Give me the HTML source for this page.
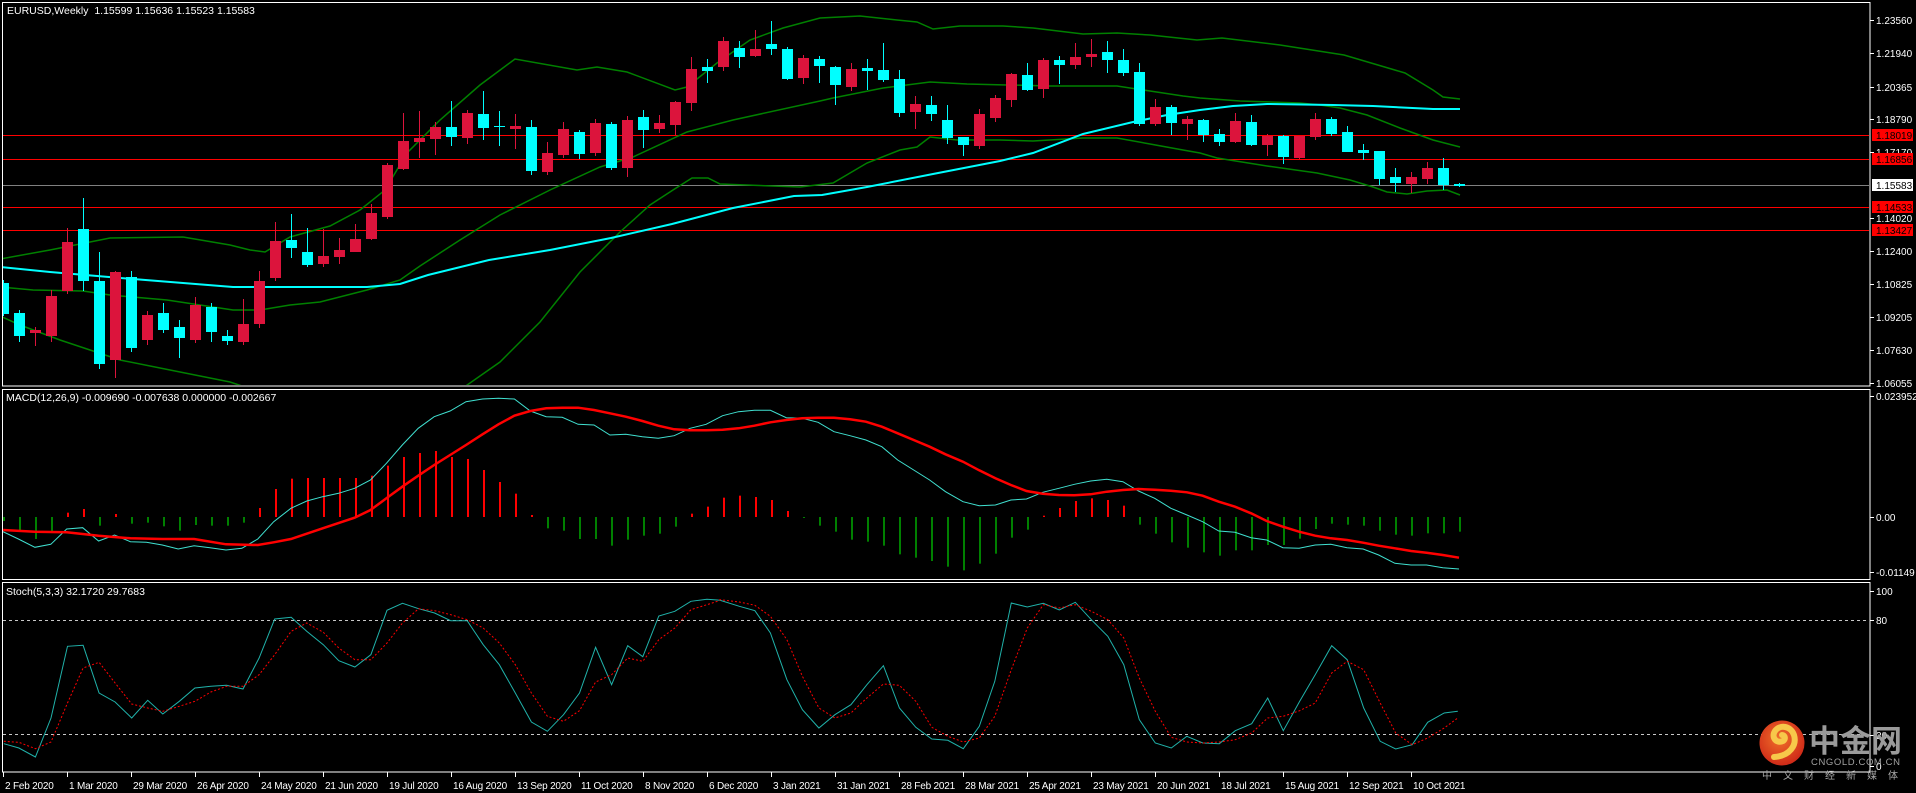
<!DOCTYPE html>
<html><head><meta charset="utf-8">
<style>
html,body{margin:0;padding:0;background:#000;width:1916px;height:793px;overflow:hidden}
svg{display:block}
text{font-family:"Liberation Sans","Noto Sans CJK SC",sans-serif;font-size:10.5px;fill:#fff}
text.ax{font-size:10px}
text.dt{font-size:10px;letter-spacing:-0.2px}
</style></head>
<body>
<svg id="s" width="1916" height="793" viewBox="0 0 1916 793" xmlns="http://www.w3.org/2000/svg">
<defs>
<clipPath id="cm"><rect x="3" y="3" width="1866" height="382"/></clipPath>
<clipPath id="cd"><rect x="3" y="390" width="1866" height="189"/></clipPath>
<clipPath id="cs"><rect x="3" y="584" width="1866" height="187"/></clipPath>
<radialGradient id="lg" cx="0.45" cy="0.4" r="0.6"><stop offset="0" stop-color="#f0702a"/><stop offset="1" stop-color="#cf2a18"/></radialGradient>
</defs>
<rect width="1916" height="793" fill="#000"/>
<g id="main" clip-path="url(#cm)"></g>
<g id="macd" clip-path="url(#cd)"></g>
<g id="stoch" clip-path="url(#cs)"></g>
<g id="frame" fill="none" stroke="#fff" stroke-width="1">
<rect x="2.5" y="2.5" width="1867.5" height="383.5"/>
<rect x="2.5" y="389.5" width="1867.5" height="190"/>
<rect x="2.5" y="582.5" width="1867.5" height="189.5"/>
</g>
<g id="ax"></g>
<text x="7" y="14">EURUSD,Weekly&#160;&#160;1.15599 1.15636 1.15523 1.15583</text>
<text x="6" y="401">MACD(12,26,9) -0.009690 -0.007638 0.000000 -0.002667</text>
<text x="6" y="595">Stoch(5,3,3) 32.1720 29.7683</text>
<g id="logo">
<circle cx="1782" cy="743" r="22.5" fill="url(#lg)"/>
<path d="M1774 757 C1790 756 1797 745 1794 735 C1791 726 1780 724 1775 731 C1771 737 1776 744 1783 741 C1786 739 1785 735 1782 735" fill="none" stroke="#f7c84a" stroke-width="6" stroke-linecap="round"/>
<text x="1809" y="752" style="font-size:31px;font-weight:bold;fill:#9a9a9a;font-family:'Noto Sans CJK SC',sans-serif">中金网</text>
<text x="1811" y="765" style="font-size:9.5px;fill:#a0a0a0;letter-spacing:0.6px">CNGOLD.COM.CN</text>
<text x="1762" y="779" style="font-size:10px;fill:#a8a8a8;letter-spacing:11px;font-family:'Noto Sans CJK SC',sans-serif">中文财经新媒体</text>
</g>
</svg>
<script>
var NS="http://www.w3.org/2000/svg";
function el(p,t,a){var e=document.createElementNS(NS,t);for(var k in a)e.setAttribute(k,a[k]);p.appendChild(e);return e;}
function mono(pts){var o=[];pts.forEach(function(q){if(!o.length||q[0]>o[o.length-1][0]+0.5)o.push(q);});return o;}
function pl(p,pts,st,w,extra){pts=mono(pts);var d=pts.map(function(q,i){return (i?"L":"M")+q[0].toFixed(1)+" "+q[1].toFixed(1)}).join("");var a={d:d,fill:"none",stroke:st,"stroke-width":w};for(var k in extra)a[k]=extra[k];return el(p,"path",a);}
var M=document.getElementById("main"),D=document.getElementById("macd"),S=document.getElementById("stoch"),AX=document.getElementById("ax"),SV=document.getElementById("s");
[[135.5,"#ff0000"],[159.5,"#ff0000"],[207.5,"#ff0000"],[230.5,"#ff0000"],[185.5,"#808080"]].forEach(function(l){el(M,"line",{x1:3,x2:1870,y1:l[0],y2:l[0],stroke:l[1],"stroke-width":1});});
var G="#008000";
pl(M,[[0,259],[50,250],[110,238],[183,237],[230,245],[250,250],[265,252],[290,237],[330,226],[360,210],[385,190],[407,153],[440,120],[480,85],[515,59],[577,70],[597,67],[627,72],[675,90],[687,87],[717,63],[750,40],[783,28],[820,18],[860,16],[897,20],[917,22],[933,29],[960,26],[1003,26],[1033,28],[1083,34],[1117,33],[1150,35],[1197,40],[1222,38],[1280,45],[1344,55],[1405,73],[1433,90],[1443,97],[1460,99]],G,1.5);
pl(M,[[0,287],[33,290],[83,291],[110,295],[167,300],[233,310],[260,310],[290,305],[320,302],[367,290],[400,280],[420,266],[460,240],[500,215],[550,190],[600,167],[633,157],[687,132],[733,120],[820,101],[833,98],[883,88],[930,82],[967,84],[1050,86],[1117,86],[1150,91],[1183,96],[1200,98],[1240,101],[1300,103],[1320,105],[1340,108],[1367,115],[1400,128],[1433,140],[1460,147]],G,1.5);
pl(M,[[0,316],[20,325],[60,340],[120,360],[180,372],[230,382],[260,392],[300,410],[400,410],[460,390],[500,362],[540,322],[580,272],[620,232],[650,205],[673,190],[692,178],[708,178],[720,184],[800,187],[833,183],[867,163],[900,150],[917,147],[930,137],[957,140],[1000,140],[1033,141],[1083,138],[1117,138],[1150,144],[1183,150],[1200,153],[1217,158],[1267,166],[1317,173],[1350,180],[1373,187],[1387,192],[1407,194],[1427,191],[1447,190],[1460,195]],G,1.5);
pl(M,[[0,267],[50,272],[133,279],[233,287],[367,287],[400,284],[428,275],[489,260],[550,250],[611,238],[672,224],[733,208],[794,196],[822,195],[867,187],[933,174],[1000,161],[1033,153],[1083,134],[1133,122],[1167,115],[1200,110],[1233,106],[1267,104],[1333,105],[1373,106],[1433,109],[1460,109]],"#00ffff",2);
var C=[["c",283,314,280,316],["c",313,336,310,342],["r",330,333,327,346],["r",296,336,290,342],["r",242,291,228,294],["c",229,281,198,291],["c",281,364,252,369],["r",272,360,271,378],["c",277,348,271,352],["r",315,340,311,345],["c",313,330,303,333],["c",327,338,320,358],["r",305,340,297,343],["c",307,332,303,342],["c",336,341,330,345],["r",324,342,299,345],["r",281,324,271,328],["r",241,278,222,281],["c",240,248,214,258],["c",252,265,228,267],["r",256,264,229,267],["r",250,257,238,264],["r",239,252,224,252],["r",213,239,204,240],["r",165,217,163,219],["r",141,169,113,170],["r",138,142,111,158],["r",127,139,122,155],["c",127,137,101,146],["r",113,138,110,144],["c",114,128,91,140],["c",126,127,111,146],["r",126,129,114,149],["c",127,171,120,175],["r",153,172,142,175],["r",129,155,122,158],["c",132,154,130,159],["r",123,153,119,156],["c",124,168,122,170],["r",120,168,116,177],["c",117,130,110,148],["r",123,129,115,133],["r",102,125,101,135],["r",69,103,57,111],["c",67,71,59,83],["r",41,67,37,71],["c",48,57,41,68],["r",49,56,30,57],["c",44,49,21,55],["c",49,79,47,80],["r",58,78,55,84],["c",59,66,56,83],["c",67,85,66,105],["r",69,87,63,91],["c",68,71,59,90],["c",70,80,43,82],["c",79,113,70,117],["r",104,112,96,129],["c",105,114,96,121],["c",120,138,105,144],["c",137,145,137,156],["r",114,146,109,149],["r",98,118,95,122],["r",74,100,73,107],["c",75,90,63,91],["r",60,89,58,98],["c",60,65,56,84],["r",57,65,43,69],["r",54,57,39,67],["c",52,60,41,73],["c",60,73,49,76],["c",72,124,63,126],["r",107,124,99,126],["c",107,123,105,135],["r",119,124,116,140],["c",120,135,119,142],["c",134,142,129,146],["r",121,142,113,143],["c",122,145,115,146],["r",136,145,134,156],["c",136,157,135,164],["r",136,158,136,159],["r",119,137,113,140],["c",119,134,117,136],["c",132,152,126,152],["c",150,153,144,160],["c",151,179,151,185],["c",177,183,168,192],["r",177,184,172,193],["r",168,179,162,184],["c",168,185,158,190],["c",184,186,183,187]];
C.forEach(function(c,i){var x=Math.round(3+16*i);var col=c[0]=="r"?"#dc143c":"#00ffff";
el(M,"rect",{x:x,y:c[3],width:1,height:Math.max(1,c[4]-c[3]),fill:col});
el(M,"rect",{x:x-5,y:c[1],width:11,height:Math.max(1,c[2]-c[1]),fill:col});});
var H=[408,440,462,440,383,372,422,387,416,413,424,437,420,422,422,413,369,312,281,279,279,279,279,272,242,216,204,198,216,222,255,291,326,390,430,437,462,462,482,464,452,446,425,386,365,338,332,336,345,378,398,422,440,464,470,482,508,518,528,545,556,536,506,458,434,392,369,348,340,345,362,419,446,472,488,502,512,496,496,480,480,461,432,416,419,422,437,449,452,445,445,440];
H.forEach(function(v,i){var x=Math.round(3+16*i);var y=385+v/3;var up=y<517;el(D,"rect",{x:x,y:Math.min(y,517),width:2,height:Math.max(1,Math.abs(517-y)),fill:up?"#ff0000":"#008000"});});
function m8(a){return a.map(function(p){return [p[0]/1.633,385+p[1]/3]});}
function m9(a){return a.map(function(p){return [940+p[0]/1.607,385+p[1]/3]});}
var sig=m8([[5,435],[57,440],[109,442],[161,452],[213,460],[265,462],[317,462],[369,478],[421,480],[447,472],[475,462],[527,430],[579,398],[605,375],[631,340],[657,305],[683,272],[709,240],[735,210],[761,180],[788,148],[814,118],[840,92],[866,78],[892,70],[918,68],[944,68],[970,75],[996,85],[1022,95],[1049,108],[1075,122],[1101,133],[1127,136],[1153,136],[1180,134],[1206,130],[1232,122],[1258,112],[1284,105],[1310,100],[1336,98],[1362,98],[1388,103],[1414,110],[1440,125],[1466,145],[1492,165],[1518,185],[1544,208]]).concat(m9([[0,193],[37,230],[63,256],[89,280],[114,300],[139,318],[165,326],[191,330],[216,331],[242,328],[268,320],[294,315],[319,312],[345,314],[371,317],[397,322],[422,332],[448,350],[474,365],[500,385],[525,408],[551,425],[577,440],[603,452],[628,460],[654,465],[680,473],[705,482],[731,490],[757,498],[782,503],[808,510],[834,518]]));
var mac=m8([[5,440],[30,462],[57,487],[83,478],[109,432],[135,428],[161,468],[187,450],[213,470],[239,472],[265,480],[291,492],[317,482],[343,488],[369,495],[395,490],[421,462],[447,410],[475,370],[501,348],[527,335],[553,325],[579,310],[605,285],[631,235],[657,180],[683,130],[709,95],[735,78],[761,50],[788,42],[814,40],[840,42],[866,78],[892,95],[918,97],[944,118],[970,120],[996,150],[1022,148],[1049,155],[1075,160],[1101,152],[1127,130],[1153,118],[1180,92],[1206,80],[1232,76],[1258,76],[1284,98],[1310,100],[1336,112],[1362,140],[1388,152],[1414,165],[1440,185],[1466,225],[1492,255],[1518,285],[1544,320]]).concat(m9([[0,300],[37,350],[63,362],[89,360],[114,345],[139,342],[165,322],[191,310],[216,298],[242,288],[268,283],[294,290],[319,318],[345,340],[371,370],[397,390],[422,410],[448,438],[474,442],[500,458],[525,465],[551,488],[577,490],[603,480],[628,478],[654,488],[680,492],[705,510],[731,535],[757,540],[782,540],[808,548],[834,552]]));
pl(D,mac,"#40e0d0",1);
pl(D,sig,"#ff0000",2.5);
function s10(a){return a.map(function(p){return [p[0]/2.119,578+p[1]/3]});}
function s11(a){return a.map(function(p){return [720+p[0]/2.063,578+p[1]/3]});}
[620.5,734.5].forEach(function(y){el(S,"line",{x1:3,x2:1870,y1:y,y2:y,stroke:"#c8c8c8","stroke-width":1,"stroke-dasharray":"3,3"});});
var K=s10([[8,497],[40,510],[75,537],[108,420],[143,205],[176,202],[210,345],[244,372],[279,420],[313,367],[345,408],[380,370],[413,330],[447,325],[480,322],[515,333],[549,240],[582,123],[617,118],[650,160],[685,200],[718,248],[752,267],[786,230],[820,97],[853,76],[887,92],[921,105],[955,128],[990,128],[1024,200],[1058,260],[1092,345],[1126,432],[1160,460],[1194,410],[1228,345],[1262,208],[1296,320],[1330,203],[1362,236],[1396,114],[1430,100],[1464,70],[1498,64],[1520,66]]).concat(s11([[0,67],[40,85],[72,98],[104,165],[138,305],[170,395],[204,450],[237,410],[270,380],[303,320],[337,263],[370,390],[404,448],[437,483],[470,487],[502,512],[535,445],[567,310],[601,75],[634,87],[667,76],[700,96],[733,73],[766,125],[800,175],[833,260],[865,425],[898,495],[931,510],[963,475],[996,495],[1030,497],[1063,458],[1097,437],[1130,360],[1162,458],[1196,370],[1228,290],[1262,203],[1294,245],[1328,390],[1362,490],[1394,513],[1428,500],[1460,433],[1494,405],[1522,400]]));
var Dd=s10([[8,490],[40,493],[75,512],[108,492],[143,375],[176,270],[210,253],[244,315],[279,378],[313,390],[345,400],[380,385],[413,370],[447,342],[480,325],[515,325],[549,290],[582,230],[617,160],[650,135],[685,163],[718,210],[752,245],[786,245],[820,195],[853,135],[887,92],[921,98],[955,110],[990,125],[1024,150],[1058,195],[1092,260],[1126,345],[1160,415],[1194,430],[1228,398],[1262,312],[1296,290],[1330,240],[1362,250],[1396,185],[1430,150],[1464,95],[1498,80],[1520,70]]).concat(s11([[0,65],[40,72],[72,82],[104,115],[138,185],[170,295],[204,390],[237,420],[270,405],[303,360],[337,318],[370,322],[404,370],[437,448],[470,475],[502,492],[535,480],[567,415],[601,275],[634,150],[667,80],[700,90],[733,80],[766,100],[800,125],[833,180],[865,300],[898,400],[931,478],[963,492],[996,495],[1030,492],[1063,485],[1097,465],[1130,420],[1162,415],[1196,398],[1228,375],[1262,285],[1294,250],[1328,275],[1362,375],[1394,465],[1428,500],[1460,480],[1494,450],[1522,420]]));
pl(S,K,"#20b2aa",1);
pl(S,Dd,"#ff0000",1,{"stroke-dasharray":"2,2"});
[["1.23560",20],["1.21940",53],["1.20365",87],["1.18790",119],["1.17170",152],["1.14020",218],["1.12400",251],["1.10825",284],["1.09205",317],["1.07630",350],["1.06055",383]].forEach(function(t){el(AX,"line",{x1:1870,x2:1874,y1:t[1]+0.5,y2:t[1]+0.5,stroke:"#fff"});var e=el(AX,"text",{x:1876,y:t[1]+4,"class":"ax"});e.textContent=t[0];});
[["1.18019",135,"#ff0000"],["1.16856",159,"#ff0000"],["1.15583",185,"#ffffff"],["1.14533",207,"#ff0000"],["1.13427",230,"#ff0000"]].forEach(function(t){el(AX,"rect",{x:1872,y:t[1]-6,width:41,height:12,fill:t[2]});var e=el(AX,"text",{x:1876,y:t[1]+4,"class":"ax",style:"fill:#000"});e.textContent=t[0];});
[["0.023952",396],["0.00",517],["-0.01149",572],["100",591],["80",620],["20",735],["0",766]].forEach(function(t){el(AX,"line",{x1:1870,x2:1874,y1:t[1]+0.5,y2:t[1]+0.5,stroke:"#fff"});var e=el(AX,"text",{x:1876,y:t[1]+4,"class":"ax"});e.textContent=t[0];});
var L=["2 Feb 2020","1 Mar 2020","29 Mar 2020","26 Apr 2020","24 May 2020","21 Jun 2020","19 Jul 2020","16 Aug 2020","13 Sep 2020","11 Oct 2020","8 Nov 2020","6 Dec 2020","3 Jan 2021","31 Jan 2021","28 Feb 2021","28 Mar 2021","25 Apr 2021","23 May 2021","20 Jun 2021","18 Jul 2021","15 Aug 2021","12 Sep 2021","10 Oct 2021"];
L.forEach(function(s,i){var x=Math.round(3+64*i)+0.5;el(AX,"line",{x1:x,x2:x,y1:772,y2:777,stroke:"#fff"});var e=el(AX,"text",{x:x+1.5,y:789,"class":"dt"});e.textContent=s;});
SV.appendChild(document.getElementById("logo"));
</script>
</body></html>
